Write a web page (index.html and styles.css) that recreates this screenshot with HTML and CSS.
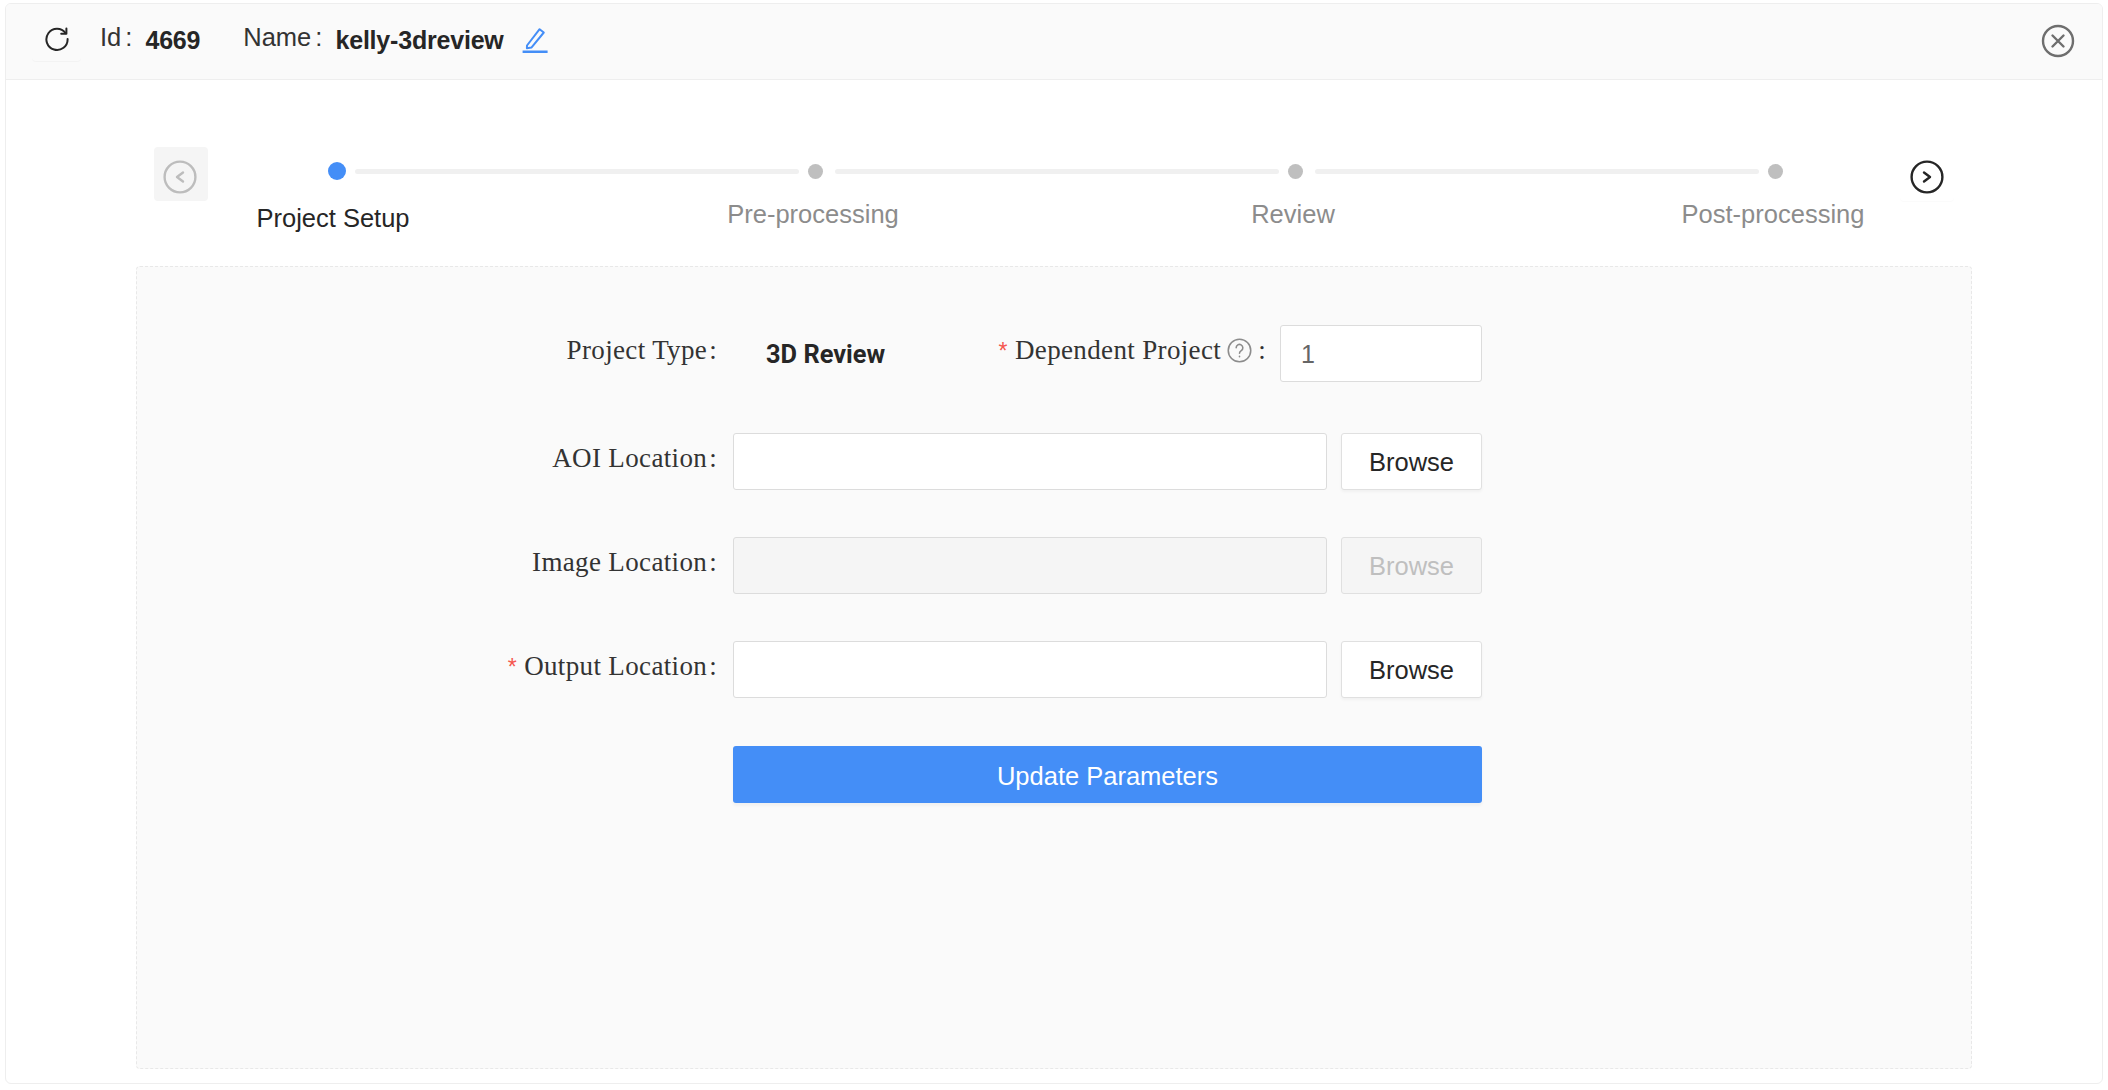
FILE: index.html
```html
<!DOCTYPE html>
<html lang="en">
<head>
  <meta charset="UTF-8">
  <meta name="viewport" content="width=device-width, initial-scale=1.0">
  <title>kelly-3dreview</title>
  <link rel="stylesheet" href="styles.css">
</head>
<body>
  <div class="card">
    <header class="top-bar">
      <button class="refresh-btn" type="button" aria-label="Refresh">
        <svg width="26" height="26" viewBox="0 0 26 26" fill="none" stroke="#262626" stroke-width="2" stroke-linecap="round" stroke-linejoin="round">
          <path d="M21.6 7.2A10.6 10.6 0 1 0 23.6 13"/>
          <path d="M22.4 2.6v5.2h-5.2"/>
        </svg>
      </button>
      <span class="meta-label meta-id">Id :</span>
      <strong class="meta-value meta-num">4669</strong>
      <span class="meta-label">Name :</span>
      <strong class="meta-value">kelly-3dreview</strong>
      <svg class="edit-icon" width="26" height="26" viewBox="0 0 26 26" fill="none" stroke="#448ef7" stroke-width="2" stroke-linejoin="round">
        <path d="M5 18.5 17.6 2.2l4.2 3.3L9.4 20.6l-4.5 0.6z"/>
        <path d="M0.6 24.8h25" stroke-width="2.4"/>
      </svg>
      <svg class="close-icon" width="34" height="34" viewBox="0 0 34 34" fill="none" stroke="#6e6e6e" stroke-width="2.4" stroke-linecap="round">
        <circle cx="17" cy="17" r="15"/>
        <path d="M11.5 11.5l11 11M22.5 11.5l-11 11"/>
      </svg>
    </header>

    <section class="stepper">
      <button class="nav-btn nav-prev" type="button" aria-label="Previous">
        <svg width="34" height="34" viewBox="0 0 34 34" fill="none" stroke="#bdbdbd" stroke-width="2.4" stroke-linecap="round" stroke-linejoin="round">
          <circle cx="17" cy="17" r="15.4"/>
          <path d="M20 12.5l-6 4.5 6 4.5"/>
        </svg>
      </button>
      <div class="steps">
        <div class="track">
          <span class="dot dot-active"></span>
          <span class="line line-first"></span>
          <span class="dot"></span>
          <span class="line"></span>
          <span class="dot"></span>
          <span class="line"></span>
          <span class="dot"></span>
        </div>
        <div class="step-labels">
          <span class="step-label step-label-active">Project Setup</span>
          <span class="step-label">Pre-processing</span>
          <span class="step-label">Review</span>
          <span class="step-label">Post-processing</span>
        </div>
      </div>
      <button class="nav-btn nav-next" type="button" aria-label="Next">
        <svg width="34" height="34" viewBox="0 0 34 34" fill="none" stroke="#262626" stroke-width="2.4" stroke-linecap="round" stroke-linejoin="round">
          <circle cx="17" cy="17" r="15.4"/>
          <path d="M14 12.5l6 4.5-6 4.5"/>
        </svg>
      </button>
    </section>

    <section class="panel">
      <form class="param-form">
        <div class="form-row form-row-first">
          <label class="field-label">Project Type<span class="colon">:</span></label>
          <div class="type-cell">
            <span class="type-value">3D Review</span>
            <label class="field-label dep-label">
              <span><span class="req">*</span> Dependent Project</span>
              <svg class="help-icon" width="25" height="25" viewBox="0 0 24 24" fill="none" stroke="#8c8c8c" stroke-width="1.5" stroke-linecap="round">
                <circle cx="12" cy="12" r="10.8"/>
                <path d="M8.8 9.4a3.2 3.2 0 1 1 4.9 2.7c-1.1.7-1.7 1.3-1.7 2.6"/>
                <path d="M12 17.6v.3"/>
              </svg>
              <span>:</span>
            </label>
            <input class="text-input dep-input" type="text" value="1">
          </div>
        </div>
        <div class="form-row">
          <label class="field-label">AOI Location<span class="colon">:</span></label>
          <input class="text-input" type="text">
          <button class="browse-btn" type="button">Browse</button>
        </div>
        <div class="form-row">
          <label class="field-label">Image Location<span class="colon">:</span></label>
          <input class="text-input" type="text" disabled>
          <button class="browse-btn" type="button" disabled>Browse</button>
        </div>
        <div class="form-row">
          <label class="field-label"><span class="req">*</span> Output Location<span class="colon">:</span></label>
          <input class="text-input" type="text">
          <button class="browse-btn" type="button">Browse</button>
        </div>
        <div class="form-row form-row-submit">
          <button class="submit-btn" type="submit">Update Parameters</button>
        </div>
      </form>
    </section>
  </div>
</body>
</html>
```

FILE: styles.css
```css
* {
  box-sizing: border-box;
}

body {
  margin: 0;
  padding: 3px 5px 6px;
  background-color: #fff;
  font-family: "Liberation Sans", Arial, sans-serif;
  color: #262626;
}

button {
  font-family: inherit;
}

.card {
  width: 2098px;
  height: 1081px;
  border: 1px solid #eee;
  border-radius: 6px;
  overflow: hidden;
}

.top-bar {
  display: flex;
  align-items: center;
  height: 76px;
  padding-left: 26px;
  background-color: #fafafa;
  border-bottom: 1px solid #eee;
}

.refresh-btn {
  display: flex;
  align-items: center;
  justify-content: center;
  align-self: flex-start;
  width: 49px;
  height: 54px;
  margin-top: 3px;
  padding: 10px 0 0;
  border: 0;
  border-radius: 4px;
  background: #fafafa;
  box-shadow: 0 1px 1px rgba(0, 0, 0, 0.03);
}

.meta-label {
  margin-bottom: 9px;
  font-size: 25.5px;
  word-spacing: -3px;
  color: #333;
  white-space: pre;
}

.meta-id {
  margin-left: 19px;
}

.meta-value {
  margin-left: 13px;
  margin-bottom: 3px;
  font-size: 25px;
  font-weight: 700;
  letter-spacing: -0.2px;
}

.meta-num {
  margin-right: 43px;
}

.edit-icon {
  margin-left: 18px;
  margin-bottom: 4px;
}

.close-icon {
  margin-left: auto;
  margin-right: 27px;
  margin-bottom: 1px;
}

.stepper {
  display: flex;
  align-items: flex-start;
  height: 186px;
  padding: 67px 0 0 148px;
}

.nav-btn {
  display: flex;
  align-items: center;
  justify-content: center;
  width: 54px;
  height: 54px;
  padding: 6px 0 0;
  border: 0;
  border-radius: 4px;
  background: #fff;
}

.nav-prev {
  background: #f5f5f5;
  padding-right: 2px;
}

.nav-next {
  box-shadow: 0 1px 1px rgba(0, 0, 0, 0.02);
}

.steps {
  width: 1692px;
  padding-top: 15px;
}

.track {
  display: flex;
  align-items: center;
  width: 1455px;
  margin-left: 120px;
}

.dot {
  flex: none;
  width: 15px;
  height: 15px;
  border-radius: 50%;
  background: #bfbfbf;
}

.dot-active {
  width: 18px;
  height: 18px;
  background: #448ef7;
}

.line {
  flex: 1;
  height: 5px;
  margin: 0 9px 0 12px;
  border-radius: 3px;
  background: #f0f0f0;
}

.line-first {
  margin-left: 9px;
}

.step-labels {
  display: flex;
  gap: 240px;
  margin: 19px 0 0 5px;
}

.step-label {
  width: 240px;
  font-size: 25.5px;
  line-height: 30px;
  text-align: center;
  color: #8c8c8c;
}

.step-label-active {
  padding-top: 4px;
  color: #262626;
}

.panel {
  width: 1836px;
  height: 803px;
  margin-left: 130px;
  padding-top: 58px;
  border: 1px dashed #e8e8e8;
  border-radius: 4px;
  background: #fafafa;
}

.form-row {
  display: flex;
  align-items: center;
  gap: 14px;
  height: 57px;
  margin-bottom: 47px;
}

.form-row-first {
  margin-bottom: 51px;
}

.form-row:nth-child(4) {
  margin-bottom: 48px;
}

.form-row-submit {
  padding-left: 596px;
}

.field-label {
  flex: none;
  width: 580px;
  margin-right: 2px;
  margin-bottom: 7px;
  font-family: "Liberation Serif", "Times New Roman", serif;
  font-size: 27px;
  letter-spacing: 0.35px;
  text-align: right;
  color: #333;
}

.colon {
  margin-left: 2px;
}

.req {
  color: #f5574f;
  font-family: "Liberation Sans", Arial, sans-serif;
  font-size: 23px;
}

.type-cell {
  display: flex;
  align-items: center;
  width: 749px;
  height: 100%;
}

.type-value {
  flex: none;
  width: 213px;
  padding-left: 33px;
  font-family: Roboto, "Liberation Sans", sans-serif;
  font-size: 25.4px;
  font-weight: 700;
  white-space: nowrap;
}

.dep-label {
  display: flex;
  align-items: center;
  justify-content: flex-end;
  gap: 6px;
  width: 320px;
  margin: 0 14px 7px 0;
  white-space: nowrap;
}

.help-icon {
  flex: none;
}

.text-input {
  width: 594px;
  height: 100%;
  padding: 2px 20px 0;
  border: 1px solid #dcdcdc;
  border-radius: 3px;
  background: #fff;
  font-family: "Liberation Sans", Arial, sans-serif;
  font-size: 25px;
  color: #666;
  outline: none;
}

.text-input:disabled {
  background: #f5f5f5;
}

.dep-input {
  flex: none;
  width: 202px;
}

.browse-btn {
  width: 141px;
  height: 100%;
  padding: 2px 0 0;
  border: 1px solid #e0e0e0;
  border-radius: 3px;
  background: #fff;
  font-size: 25.5px;
  color: #262626;
  box-shadow: 0 2px 3px rgba(0, 0, 0, 0.04);
}

.browse-btn:disabled {
  background: #f5f5f5;
  color: #bfbfbf;
  box-shadow: none;
}

.submit-btn {
  width: 749px;
  height: 57px;
  padding: 3px 0 0;
  border: 0;
  border-radius: 3px;
  background: #448ef7;
  font-size: 25.5px;
  color: #fff;
  box-shadow: 0 3px 3px rgba(0, 0, 0, 0.04);
}
```
